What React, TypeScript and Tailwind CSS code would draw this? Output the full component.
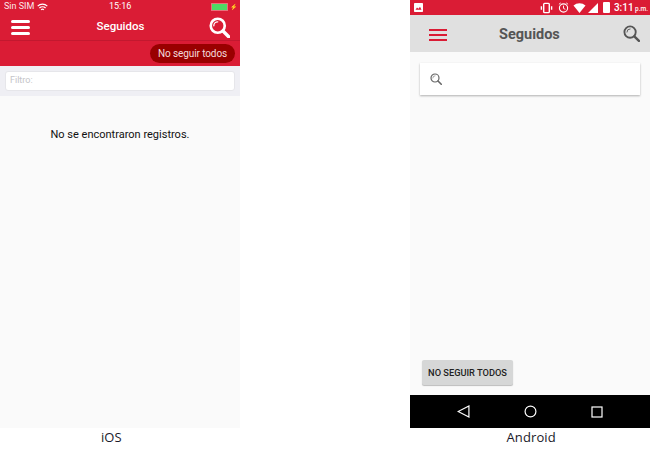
// Side by side comparison of the "Seguidos" screen on iOS and Android.
const red = 'bg-[#da1c35]'

function SearchGlyph({ className, sw = 2 }: { className: string; sw?: number }) {
  return (
    <svg viewBox="0 0 24 24" fill="none" stroke="currentColor" className={className}>
      <circle cx="10" cy="10" r="8" strokeWidth={sw} />
      <path d="M16 16l6.500 6.500" strokeWidth={sw * 1.3} strokeLinecap="round" />
      <path d="M5.500 10a4.500 4.500 0 0 1 4.500-4.500" strokeWidth={sw * 0.5} strokeLinecap="round" />
    </svg>
  )
}

function IosScreen() {
  return (
    <div className="flex h-[428px] w-[240px] flex-col bg-[#fafafa]">
      <div className={`${red} h-[66px] shrink-0 text-white`}>
        <div className="flex h-[14px] items-center pl-1 pr-[3px] text-[9px]">
          <span className="w-[31px] whitespace-nowrap opacity-90">Sin SIM</span>
          <svg viewBox="0 0 16 12" className="ml-[2px] h-[9px] w-[11px]" fill="none" stroke="white" strokeWidth="1.800">
            <path d="M1 4a10 10 0 0 1 14 0M3.500 6.800a6.500 6.500 0 0 1 9 0M6 9.400a3 3 0 0 1 4 0" />
          </svg>
          <span className="ml-[61px] w-[22px] text-center text-[9px]">15:16</span>
          <div className="ml-auto flex items-center gap-[2px]">
            <div className="h-[8px] w-[17px] border border-[#e8707a] bg-[#4fd964]" />
            <span className="text-[6px] leading-none">⚡</span>
          </div>
        </div>
        <div className="flex h-[27px] items-center justify-between border-b border-[#c2182f] pl-[11px] pr-[10px]">
          <div className="flex w-[19px] flex-col gap-[3px]">
            <div className="h-[3px] rounded-sm bg-white" />
            <div className="h-[3px] rounded-sm bg-white" />
            <div className="h-[3px] rounded-sm bg-white" />
          </div>
          <span className="ml-[2px] text-[11.5px] font-medium">Seguidos</span>
          <SearchGlyph className="h-[21px] w-[21px] text-white" sw={3} />
        </div>
        <div className="flex justify-end pr-[5px] pt-[3px]">
          <div className="flex h-[19px] w-[85px] items-center justify-center rounded-full bg-[#990000] text-[10px] tracking-[-0.1px] text-[#f4dcdc]">
            No seguir todos
          </div>
        </div>
      </div>
      <div className="h-[30px] shrink-0 bg-[#efeff4] px-[5px] pt-[5px]">
        <div className="flex h-[20px] items-center rounded-[3px] border border-[#e6e6ea] bg-white pl-[4px] text-[9px] text-[#c4c4c8]">
          Filtro:
        </div>
      </div>
      <p className="mt-[32px] text-center text-[11px] leading-[13px] text-[#111111]">
        No se encontraron registros.
      </p>
    </div>
  )
}

function AndroidScreen() {
  return (
    <div className="flex h-[428px] w-[240px] flex-col bg-[#fafafa]">
      <div className={`${red} flex h-[15px] shrink-0 items-center pl-[4px] pr-[2px] text-white`}>
        <svg viewBox="0 0 12 12" className="h-[9px] w-[9px]" fill="white">
          <path d="M1 0h10a1 1 0 0 1 1 1v10a1 1 0 0 1-1 1H1a1 1 0 0 1-1-1V1a1 1 0 0 1 1-1z" />
          <path d="M2 9l2-3 2 1.500L8 5l2 4z" fill="#da1c35" />
        </svg>
        <div className="ml-auto flex items-center">
          <svg viewBox="0 0 14 12" className="h-[12px] w-[13px]" fill="none" stroke="white">
            <rect x="4" y="1" width="6" height="10" rx="1" strokeWidth="1.500" />
            <path d="M1.500 4v4M12.500 4v4" strokeWidth="1.500" />
          </svg>
          <svg viewBox="0 0 12 12" className="ml-[5px] h-[11px] w-[11px]" fill="none" stroke="white">
            <circle cx="6" cy="6.500" r="4.500" strokeWidth="1.200" />
            <path d="M6 4v3l2 1M1 2.500L3 1M11 2.500L9 1" strokeWidth="1" />
          </svg>
          <svg viewBox="0 0 12 10" className="ml-[4px] h-[10px] w-[13px]" fill="white">
            <path d="M6 10L0 2.500a9 9 0 0 1 12 0z" />
          </svg>
          <svg viewBox="0 0 10 10" className="ml-[2px] h-[10px] w-[10px]" fill="white">
            <path d="M10 0v10H0z" />
          </svg>
          <div className="ml-[5px] h-[11px] w-[7px] rounded-[1px] bg-white" />
          <span className="ml-[4px] whitespace-nowrap text-[10px] font-medium leading-none">
            3:11 <span className="ml-[-1px] text-[6.5px]">p.m.</span>
          </span>
        </div>
      </div>
      <div className="flex h-[37px] shrink-0 items-center bg-[#e0e0e0] pl-[19px] pr-[10px]">
        <div className="flex w-[18px] flex-col gap-[3px] pt-[3px]">
          <div className="h-[2px] bg-[#da1c35]" />
          <div className="h-[2px] bg-[#da1c35]" />
          <div className="h-[2px] bg-[#da1c35]" />
        </div>
        <span className="ml-[52px] pt-[2px] text-[14.5px] font-bold text-[#555555]">Seguidos</span>
        <SearchGlyph className="ml-auto h-[17px] w-[17px] text-[#555555]" sw={2.6} />
      </div>
      <div className="mx-[10px] mt-[11px] flex h-[32px] items-center bg-white pl-[10px] shadow-[0_1px_2px_rgba(0,0,0,0.3)]">
        <SearchGlyph className="h-[12px] w-[12px] text-[#666666]" sw={2.4} />
      </div>
      <div className="mt-auto px-[12px] pb-[10px]">
        <div className="flex h-[25px] w-[91px] items-center justify-center rounded-[2px] bg-[#d6d7d7] text-[9.25px] font-medium text-[#222222] shadow-[0_1px_1px_rgba(0,0,0,0.25)]">
          NO SEGUIR TODOS
        </div>
      </div>
      <div className="flex h-[33px] shrink-0 items-center justify-center gap-[54px] bg-black pr-[1px]">
        <svg viewBox="0 0 12 12" className="h-[13px] w-[13px]" fill="none" stroke="white" strokeWidth="1.100">
          <path d="M11 1v10L1 6z" />
        </svg>
        <svg viewBox="0 0 12 12" className="h-[13px] w-[13px]" fill="none" stroke="white" strokeWidth="1.100">
          <circle cx="6" cy="6" r="5" />
        </svg>
        <svg viewBox="0 0 12 12" className="h-[12px] w-[12px]" fill="none" stroke="white" strokeWidth="1.200">
          <rect x="1" y="1" width="10" height="10" />
        </svg>
      </div>
    </div>
  )
}

export default function App() {
  return (
    <div className="h-[450px] w-[650px] overflow-hidden bg-white font-['Roboto','Liberation_Sans',sans-serif]">
      <div className="flex justify-between">
        <IosScreen />
        <AndroidScreen />
      </div>
      <div className="flex font-['Open_Sans','DejaVu_Sans',sans-serif] text-[13px] leading-[18px] text-[#1a1a2a]">
        <span className="ml-[101px]">iOS</span>
        <span className="ml-[385px] tracking-[0.1px]">Android</span>
      </div>
    </div>
  )
}
